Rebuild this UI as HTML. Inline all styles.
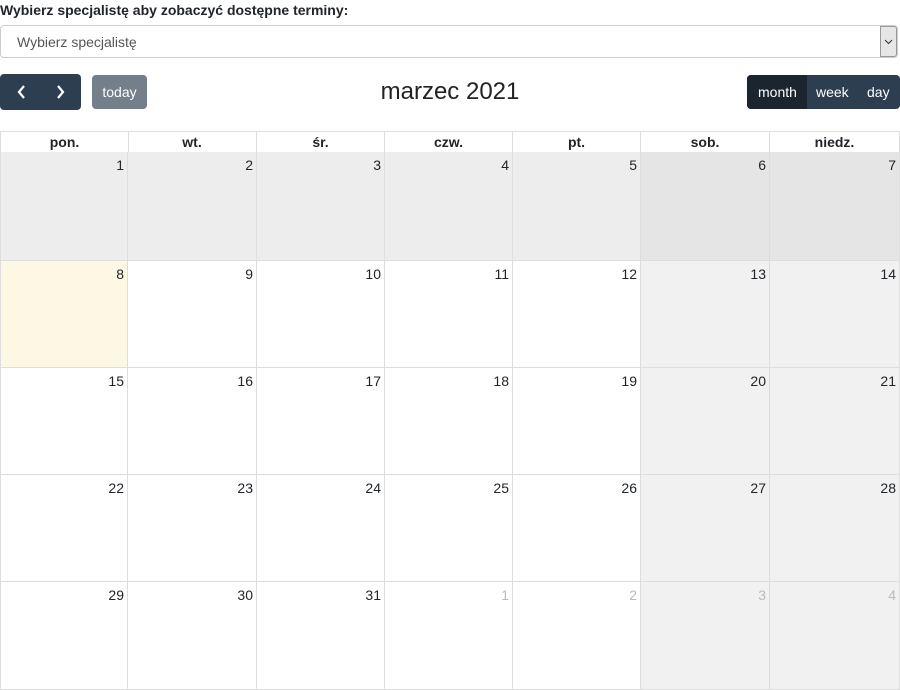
<!DOCTYPE html>
<html><head><style>
body{margin:0;width:900px;height:690px;background:#fff;font-family:"Liberation Sans",sans-serif;color:#212529;position:relative;overflow:hidden}
.a{position:absolute}
.lbl{left:0;top:2px;font-weight:bold;font-size:14px;color:#212529}
.sel{left:0;top:25px;width:898px;height:33px;border:1px solid #ccc;border-radius:4px;box-sizing:border-box}
.sel span{position:absolute;left:16px;top:8px;font-size:14px;color:#555}
.arr{right:0;top:0;width:17px;height:31px;background:#e6e6e6;border:1px solid #999;box-sizing:border-box;border-radius:0 3px 3px 0}
.nav{left:0;top:74px;width:81px;height:36px;background:#2c3e50;border-radius:4px}
.today{left:92px;top:75px;width:55px;height:34px;background:#737f8b;border-radius:4px;color:#fff;font-size:14px;text-align:center;line-height:34px}
.title{left:0;width:900px;top:78px;text-align:center;font-size:24px;color:#222}
.views{left:747px;top:75px;width:153px;height:34px;background:#2c3e50;border-radius:4px;color:#fff;font-size:14px}
.views span{position:absolute;top:9px}
.cell{position:absolute;border-right:1px solid #ddd;border-bottom:1px solid #ddd;box-sizing:border-box}
.num{position:absolute;right:3px;top:5px;font-size:14px}
.hd{position:absolute;top:131px;height:22px;border:1px solid #ddd;border-left:none;box-sizing:border-box;text-align:center;font-weight:bold;font-size:14px;line-height:20px}
</style></head><body>
<div class="a lbl">Wybierz specjalistę aby zobaczyć dostępne terminy:</div>
<div class="a sel"><span>Wybierz specjalistę</span><div class="a arr"><svg width="15" height="29"><path d="M4 13l3.5 3.5L11 13" stroke="#333" stroke-width="1" fill="none"/></svg></div></div>
<div class="a nav"><svg width="81" height="36"><path d="M24 12l-5 6 5 6M58 12l5 6-5 6" stroke="#fff" stroke-width="2.2" fill="none"/></svg></div>
<div class="a today">today</div>
<div class="a title">marzec 2021</div>
<div class="a views"><div class="a" style="left:0;top:0;width:60px;height:34px;background:#1a252f;border-radius:4px 0 0 4px"></div><span style="left:11px">month</span><span style="left:69px">week</span><span style="left:120px">day</span></div>
<div id="g"></div>
<script>
var xs=[0,128,257,385,513,641,770,900],ys=[152,261,368,475,582,690];
var hd=["pon.","wt.","śr.","czw.","pt.","sob.","niedz."],h="";
for(var c=0;c<7;c++)h+='<div class="hd" style="left:'+xs[c]+'px;width:'+(xs[c+1]-xs[c]+(c==0?1:0))+'px;'+(c==0?'border-left:1px solid #ddd;':'')+'">'+hd[c]+'</div>';
for(var r=0;r<5;r++)for(c=0;c<7;c++){var d=r*7+c+1,o=false;if(d>31){d-=31;o=true}
var bg='#fff';if(r==0)bg=c>=5?'#e5e5e5':'#ededed';else if(c>=5)bg='#f1f1f1';if(r==1&&c==0)bg='#fcf8e3';
h+='<div class="cell" style="left:'+xs[c]+'px;top:'+ys[r]+'px;width:'+(xs[c+1]-xs[c])+'px;height:'+(ys[r+1]-ys[r])+'px;background:'+bg+';'+(c==0?'border-left:1px solid #ddd;':'')+'"><span class="num" style="color:'+(o?'#bbb':'#212529')+'">'+d+'</span></div>';}
document.getElementById('g').innerHTML=h;
</script>
</body></html>
